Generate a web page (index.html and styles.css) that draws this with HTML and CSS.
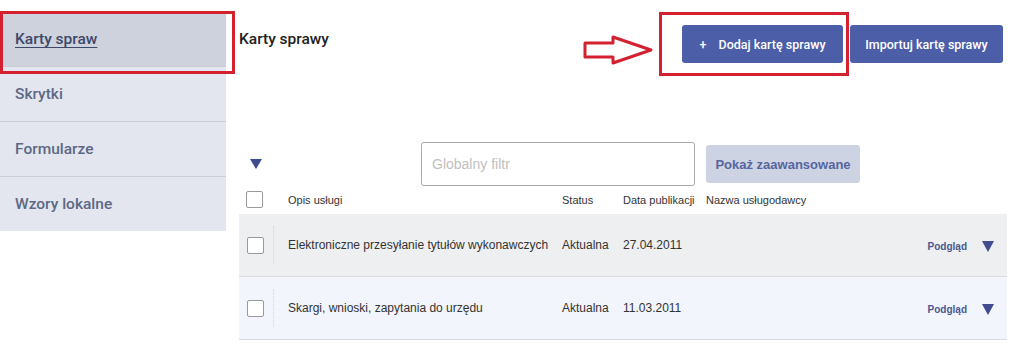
FILE: index.html
```html
<!DOCTYPE html>
<html lang="pl">
<head>
    <meta charset="UTF-8">
    <title>Karty sprawy</title>
    <link rel="stylesheet" href="styles.css">
</head>
<body>
    <div class="page">
        <!-- Menu boczne -->
        <div class="sidebar">
            <a class="side-item active" href="#karty">Karty spraw</a>
            <a class="side-item" href="#skrytki">Skrytki</a>
            <a class="side-item" href="#formularze">Formularze</a>
            <a class="side-item" href="#wzory">Wzory lokalne</a>
        </div>

        <!-- Zawartosc -->
        <div class="main">
            <div class="header">
                <h2>Karty sprawy</h2>
                <div class="actions">
                    <button class="btn-primary btn-add"><span class="plus">+</span> Dodaj kartę sprawy</button>
                    <button class="btn-primary btn-import">Importuj kartę sprawy</button>
                </div>
            </div>

            <div class="toolbar">
                <svg class="tri tri-filter" width="12" height="10" viewBox="0 0 12 10"><polygon points="0,0 12,0 6,10" fill="#3f4c8f"/></svg>
                <input class="filter-input" type="text" placeholder="Globalny filtr">
                <button class="btn-light">Pokaż zaawansowane</button>
            </div>

            <div class="table">
                <div class="row head">
                    <div class="cell-check"><span class="checkbox"></span></div>
                    <div>Opis usługi</div>
                    <div>Status</div>
                    <div>Data publikacji</div>
                    <div>Nazwa usługodawcy</div>
                    <div></div>
                </div>
                <div class="row item odd">
                    <div class="cell-check"><span class="checkbox"></span></div>
                    <div>Elektroniczne przesyłanie tytułów wykonawczych</div>
                    <div>Aktualna</div>
                    <div>27.04.2011</div>
                    <div></div>
                    <div class="cell-action"><a href="#">Podgląd</a><svg class="tri" width="12" height="11" viewBox="0 0 12 11"><polygon points="0,0 12,0 6,11" fill="#3f4c8f"/></svg></div>
                </div>
                <div class="row item even">
                    <div class="cell-check"><span class="checkbox"></span></div>
                    <div>Skargi, wnioski, zapytania do urzędu</div>
                    <div>Aktualna</div>
                    <div>11.03.2011</div>
                    <div></div>
                    <div class="cell-action"><a href="#">Podgląd</a><svg class="tri" width="12" height="11" viewBox="0 0 12 11"><polygon points="0,0 12,0 6,11" fill="#3f4c8f"/></svg></div>
                </div>
            </div>
        </div>
    </div>

    <!-- Adnotacje (czerwone ramki i strzalka) -->
    <div class="mark mark-side"></div>
    <div class="mark mark-btn"></div>
    <svg class="arrow" width="80" height="40" viewBox="580 30 80 40">
        <polygon points="585,43 613,43 613,37 651,50 613,63 613,57 585,57" fill="none" stroke="#d42130" stroke-width="3" stroke-linejoin="round"/>
    </svg>
</body>
</html>
```

FILE: styles.css
```css
body { margin: 0; background: #fff; font-family: "Liberation Sans", Arial, sans-serif; color: #333; }

.page {
    display: flex;
    width: 1024px;
    height: 353px;
    overflow: hidden;
}

/* Menu boczne */
.sidebar {
    width: 226px;
    flex-shrink: 0;
    margin-top: 12px;
    align-self: flex-start;
    display: flex;
    flex-direction: column;
}

.side-item {
    display: flex;
    align-items: center;
    height: 54px;
    padding-left: 15px;
    background: #e3e6ee;
    border-bottom: 1px solid #c9cdd6;
    font-family: Roboto, sans-serif;
    font-weight: 500;
    font-size: 15.5px;
    color: #5d6884;
    text-decoration: none;
}

.side-item:last-child { border-bottom: none; }

.side-item.active {
    background: #cdd2dd;
    color: #3e4868;
    text-decoration: underline;
    text-underline-offset: 3px;
}

/* Zawartosc */
.main {
    width: 768px;
    margin-left: 13px;
}

.header {
    display: flex;
    justify-content: space-between;
    align-items: flex-start;
    height: 142px;
}

.header h2 {
    margin: 30px 0 0;
    font-family: Roboto, sans-serif;
    font-weight: 500;
    font-size: 15.5px;
    color: #222;
}

.actions {
    display: flex;
    gap: 7px;
    margin-top: 25px;
    margin-right: 4px;
}

.btn-primary {
    height: 38px;
    padding: 0;
    background: #4b5ea7;
    color: #fff;
    border: none;
    border-radius: 3px;
    font-family: Roboto, sans-serif;
    font-weight: 500;
    font-size: 12.5px;
    cursor: pointer;
}

.btn-add { width: 161px; }
.btn-add .plus { margin-right: 9px; }
.btn-import { width: 153px; }

.toolbar {
    display: flex;
    align-items: center;
    height: 44px;
}

.tri-filter { margin-left: 11px; }

.filter-input {
    box-sizing: border-box;
    width: 274px;
    height: 44px;
    margin-left: 159px;
    padding: 0 10px;
    border: 1px solid #aaa;
    border-radius: 3px;
    font-family: "Liberation Sans", Arial, sans-serif;
    font-size: 14px;
    outline: none;
}

.filter-input::placeholder { color: #c0c0c0; }

.btn-light {
    width: 154px;
    height: 38px;
    margin-left: 11px;
    background: #cdd3e3;
    color: #56659e;
    border: none;
    border-radius: 3px;
    font-family: "Liberation Sans", Arial, sans-serif;
    font-weight: bold;
    font-size: 13px;
}

/* Tabela */
.table { margin-top: 1px; width: 768px; }

.row {
    display: grid;
    grid-template-columns: 49px 274px 61px 83px 1fr 100px;
    align-items: center;
    white-space: nowrap;
}

.row.head { height: 25px; font-size: 11px; color: #333; padding-bottom: 2px; }
.row.head .cell-check { padding-left: 7px; display: flex; }

.row.item {
    height: 63px;
    font-size: 12px;
    color: #333;
    border-bottom: 1px solid #d9dbe0;
    box-sizing: border-box;
}

.row.odd { background: #eeeff1; }
.row.even { background: #f2f5fb; }

.row.item .cell-check {
    height: 38px;
    display: flex;
    align-items: center;
    padding-left: 8px;
    position: relative;
}

.row.item .cell-check::after {
    content: "";
    position: absolute;
    left: 34px;
    top: 0;
    bottom: 0;
    border-left: 1px dotted #d4d6db;
}

.checkbox {
    display: inline-block;
    width: 15px;
    height: 15px;
    border: 1px solid #999;
    border-radius: 2px;
    background: #fff;
}

.cell-action {
    display: flex;
    align-items: center;
    justify-content: flex-end;
    gap: 15px;
    padding-right: 13px;
    padding-top: 2px;
}

.cell-action a {
    font-size: 10px;
    font-weight: bold;
    color: #4a5890;
    text-decoration: none;
}

/* Adnotacje */
.mark {
    position: absolute;
    border: 3px solid #d42130;
    box-sizing: border-box;
}

.mark-side { left: 0; top: 11px; width: 235px; height: 63px; }
.mark-btn { left: 659px; top: 12px; width: 190px; height: 64px; }

.arrow { position: absolute; left: 580px; top: 30px; }
```
